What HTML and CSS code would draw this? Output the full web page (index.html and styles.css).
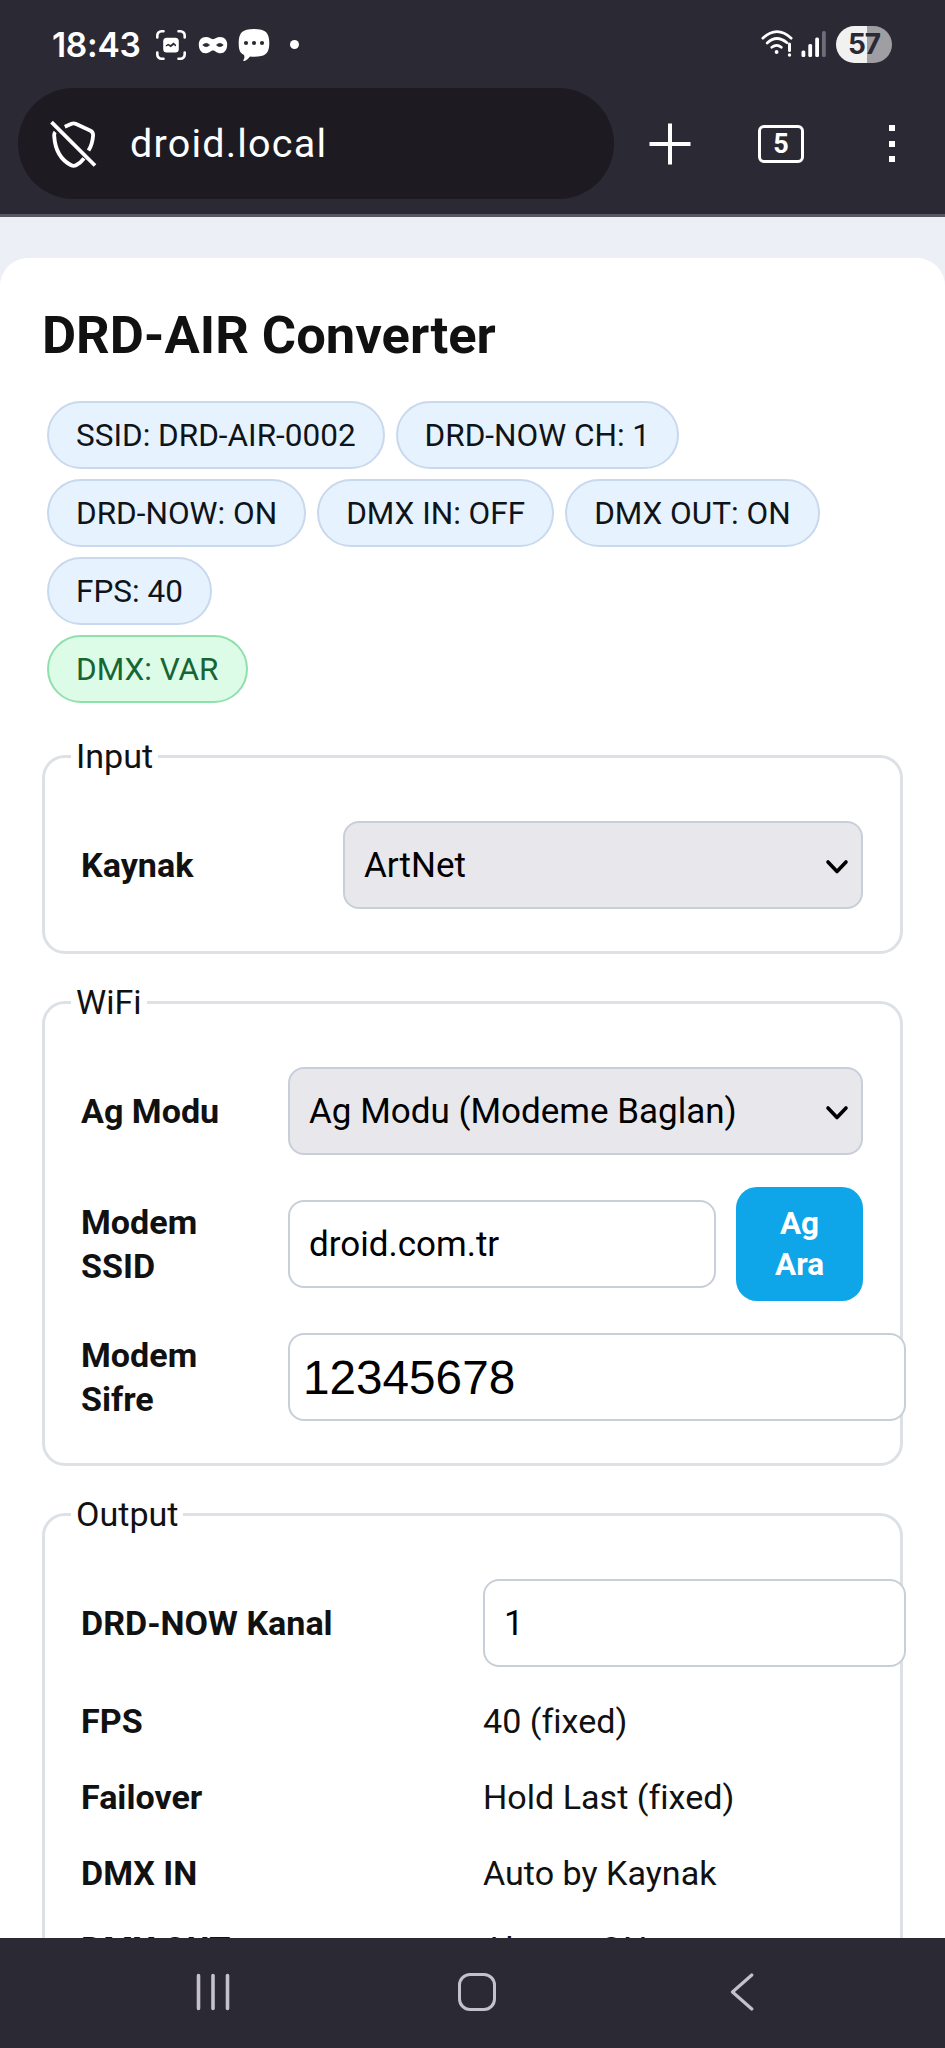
FILE: index.html
```html
<!DOCTYPE html>
<html lang="tr">
<head>
<meta charset="utf-8">
<title>DRD-AIR Converter</title>
<link rel="stylesheet" href="styles.css">
</head>
<body>
<header class="chrome">
  <div class="status">
    <span class="clock">18:43</span>
    <svg class="ic-capture" width="32" height="32" viewBox="0 0 32 32" fill="none" stroke="#fff" stroke-width="2.6" stroke-linecap="round">
      <path d="M2.3 8.5V6.5a4.2 4.2 0 0 1 4.2-4.2h2M23.500 2.300h2a4.200 4.200 0 0 1 4.200 4.200v2M29.700 23.500v2a4.200 4.200 0 0 1-4.200 4.200h-2M8.500 29.700h-2a4.200 4.200 0 0 1-4.200-4.200v-2"/>
      <rect x="8.200" y="8.800" width="15.600" height="14.800" rx="3.500" fill="#fff" stroke="none"/>
      <path d="M10.800 17.500v-1.200l2.400-1.600 2.300 1.300 3-2.600 2.500 2.400v1.700l-2.300-1.500-3 2.200-2.400-1.700z" fill="#2b2933" stroke="none"/>
    </svg>
    <svg class="ic-mask" width="30" height="20" viewBox="0 0 30 20">
      <path d="M8 1C3.500 1 .8 4 .8 8.500c0 5 2.500 8.800 6.700 8.800 3.800 0 5-2.800 7.500-2.800s3.700 2.800 7.500 2.800c4.200 0 6.700-3.800 6.700-8.800C29.200 4 26.500 1 22 1c-3.300 0-4.800 2.200-7 2.200S11.300 1 8 1z" fill="#fff"/>
      <path d="M4.800 9Q8.300 5.800 11.500 9 8.300 12.200 4.800 9zM25.200 9Q21.700 5.800 18.500 9 21.700 12.200 25.200 9z" fill="#2b2933" stroke="#2b2933" stroke-width=".8" stroke-linejoin="round"/>
    </svg>
    <svg class="ic-chat" width="32" height="34" viewBox="0 0 32 34">
      <path d="M16 1C4.500 1 .7 4.500.7 15c0 6.500 1 9.800 5.100 11.800 1 1.600.8 3.600-.4 5.300-.4.800.2 1.200 1.100.9 2.200-.8 3.800-2.400 5.500-4.500 1.300.2 2.600.2 4 .2C27.500 28.700 31.300 25.500 31.300 15S27.500 1 16 1z" fill="#fff"/>
      <g fill="#2b2933"><circle cx="8" cy="15" r="2.100"/><circle cx="16" cy="15" r="2.100"/><circle cx="24" cy="15" r="2.100"/></g>
    </svg>
    <span class="more"></span>
    <svg class="ic-wifi" width="32" height="28" viewBox="0 0 32 28" fill="none" stroke="#fff" stroke-width="2.700" stroke-linecap="round">
      <path d="M1.800 8.200Q16 -4.800 30.200 8.200M6.200 13Q15.500 4.200 26 12.700M10.800 17.300Q15.700 13.300 20.300 17.300"/>
      <circle cx="15.600" cy="22" r="1.900" fill="#fff" stroke="none"/>
      <path d="M28.500 14v6.500" stroke-width="3"/><circle cx="28.500" cy="25" r="1.700" fill="#fff" stroke="none"/>
    </svg>
    <svg class="ic-signal" width="26" height="28" viewBox="0 0 26 28" fill="#fff">
      <rect x=".5" y="20.500" width="3.800" height="6.500" rx="1.500"/><rect x="7.300" y="14" width="3.800" height="13" rx="1.500"/><rect x="14.200" y="7.500" width="3.800" height="19.500" rx="1.500"/><rect x="21" y="1" width="3.800" height="26" rx="1.500" fill="#6f6d77"/>
    </svg>
    <span class="battery">57</span>
  </div>
  <div class="toolbar">
    <div class="url">
      <svg width="48" height="48" viewBox="0 0 48 48" fill="none" stroke="#fff" stroke-width="3.800" stroke-linejoin="round">
        <path d="M1.500 2.200L45 45.500"/>
        <path d="M14.800 6.800l6.800-3q2-.9 4 0l14.500 6.600q3.200 1.500 3 5c-.4 6-1.800 10.800-4.600 15.200M5.200 12q-1.200 1.200-1 4c.9 14 6.800 24 17 29.300q2.400 1.200 4.800 0c3.200-1.700 5.800-4 8-7"/>
      </svg>
      <span>droid.local</span>
    </div>
    <svg class="ic-plus" width="42" height="42" viewBox="0 0 42 42" stroke="#fff" stroke-width="4"><path d="M21 .5v41M.5 21h41"/></svg>
    <span class="tabs">5</span>
    <span class="kebab"><i></i><i></i><i></i></span>
  </div>
</header>

<main class="page">
  <section class="card">
    <h1>DRD-AIR Converter</h1>
    <div class="pills">
      <div class="line"><span class="pill">SSID: DRD-AIR-0002</span><span class="pill">DRD-NOW CH: 1</span></div>
      <div class="line"><span class="pill">DRD-NOW: ON</span><span class="pill">DMX IN: OFF</span><span class="pill">DMX OUT: ON</span></div>
      <div class="line"><span class="pill">FPS: 40</span></div>
      <div class="line"><span class="pill ok">DMX: VAR</span></div>
    </div>

    <fieldset class="input-set">
      <legend>Input</legend>
      <div class="row">
        <label>Kaynak</label>
        <div class="pick">
          <select><option>ArtNet</option></select>
          <svg width="24" height="16" viewBox="0 0 24 16" fill="none" stroke="#000" stroke-width="3.600" stroke-linecap="round" stroke-linejoin="round"><path d="M3 3l9 9.500L21 3"/></svg>
        </div>
      </div>
    </fieldset>

    <fieldset class="wifi-set">
      <legend>WiFi</legend>
      <div class="row">
        <label>Ag Modu</label>
        <div class="pick">
          <select><option>Ag Modu (Modeme Baglan)</option></select>
          <svg width="24" height="16" viewBox="0 0 24 16" fill="none" stroke="#000" stroke-width="3.600" stroke-linecap="round" stroke-linejoin="round"><path d="M3 3l9 9.500L21 3"/></svg>
        </div>
      </div>
      <div class="row tall">
        <label>Modem<br>SSID</label>
        <div class="scan"><input type="text" value="droid.com.tr"><button>Ag<br>Ara</button></div>
      </div>
      <div class="row">
        <label>Modem<br>Sifre</label>
        <input class="wide secret" type="text" value="12345678">
      </div>
    </fieldset>

    <fieldset class="output-set">
      <legend>Output</legend>
      <div class="row first"><label>DRD-NOW Kanal</label><input class="wide" type="text" value="1"></div>
      <div class="row short"><label>FPS</label><span>40 (fixed)</span></div>
      <div class="row short"><label>Failover</label><span>Hold Last (fixed)</span></div>
      <div class="row short"><label>DMX IN</label><span>Auto by Kaynak</span></div>
      <div class="row short"><label>DMX OUT</label><span>Always ON</span></div>
    </fieldset>
  </section>
</main>

<nav class="navbar">
  <svg class="nav-recents" width="34" height="38" viewBox="0 0 34 38" stroke="#c5c1cc" stroke-width="3.600" stroke-linecap="round"><path d="M2.500 2.500v33M17 2.500v33M31.500 2.500v33"/></svg>
  <span class="nav-home"></span>
  <svg class="nav-back" width="24" height="38" viewBox="0 0 24 38" fill="none" stroke="#c5c1cc" stroke-width="3.200" stroke-linecap="round" stroke-linejoin="round"><path d="M21.800 2L2.500 19l19.300 17"/></svg>
</nav>
</body>
</html>
```
FILE: styles.css
```css
* { box-sizing: border-box; }
body {
  margin: 0;
  width: 945px;
  height: 2048px;
  overflow: hidden;
  display: flex;
  flex-direction: column;
  background: #edeff6;
  color: #111;
  font: 34.1px/44px Roboto, sans-serif;
}

/* Browser chrome */
.chrome {
  flex: none;
  height: 217px;
  background: #2b2933;
  border-bottom: 3px solid #58565e;
  color: #fff;
}
.status {
  height: 88px;
  padding-left: 52px;
  display: flex;
  align-items: center;
}
.status > * { flex: none; }
.clock { width: 103px; font: 600 33.500px/40px Inter, sans-serif; letter-spacing: -.3px; padding-top: 1px; }
.ic-capture { margin-top: 2px; }
.ic-mask { margin: 3px 0 0 11px; }
.ic-chat { margin: 2px 0 0 10px; }
.more { width: 9px; height: 9px; border-radius: 50%; background: #fff; margin: 1px 0 0 20px; }
.ic-wifi { margin-left: 462px; }
.ic-signal { margin: 0 0 0 8px; }
.battery {
  width: 56px;
  height: 37px;
  margin: 1px 0 0 9px;
  border-radius: 19px;
  background: linear-gradient(90deg, #f1f1f1 55%, #9f9ea3 55%);
  color: #2b2933;
  text-align: center;
  font: 700 28px/37px Inter, sans-serif;
  letter-spacing: -1px;
}
.toolbar { height: 111px; padding-left: 18px; display: flex; align-items: center; }
.url {
  width: 596px;
  height: 111px;
  border-radius: 56px;
  background: #1d1b21;
  display: flex;
  align-items: center;
  padding-left: 32px;
  gap: 32px;
  font-size: 39.500px;
  letter-spacing: 1.200px;
}
.ic-plus { margin-left: 35px; }
.tabs {
  width: 46px;
  height: 38px;
  margin: 1px 0 0 67px;
  border: 3px solid #fff;
  border-radius: 6px;
  text-align: center;
  font-size: 27px;
  line-height: 32px;
  font-weight: 700;
}
.kebab { margin-left: 85px; display: grid; gap: 9.500px; }
.kebab i { width: 6px; height: 6px; background: #fff; }

/* Page */
.page { flex: 1; min-height: 0; overflow: hidden; padding-top: 41px; }
.card { background: #fff; border-radius: 28px; padding: 46px 42px 60px; height: 1900px; }
h1 { margin: 0; font-size: 52.500px; line-height: 62px; font-weight: 700; }
.pills { padding: 35px 0 0 5px; display: grid; gap: 10px; }
.line { display: flex; gap: 11px; }
.pill {
  height: 68px;
  padding: 1px 27px 0;
  border: 2px solid #c9d9ed;
  border-radius: 34px;
  background: #e6f2fe;
  font-size: 31.500px;
  line-height: 64px;
  color: #0f1419;
}
.pill.ok { background: #dcfce7; border-color: #8fe0ac; color: #166534; }

fieldset {
  margin: 0;
  min-width: 0;
  border: 3px solid #dde1e5;
  border-radius: 23px;
  padding: 33px 37px 32px 36px;
}
legend { margin-left: -10px; padding: 0 5px; height: 44px; }
.input-set { margin-top: 31px; --label: 262px; }
.wifi-set { margin-top: 26px; --label: 207px; }
.output-set { margin-top: 26px; --label: 402px; height: 640px; }
.row {
  height: 108px;
  display: grid;
  grid-template-columns: var(--label) minmax(0, 1fr);
  align-items: center;
}
.row.tall { height: 158px; }
.row.short { height: 76px; }
.row.first { margin-bottom: 6px; }
label { font-weight: 700; }
input, select {
  width: 100%;
  height: 88px;
  margin: 0;
  border: 2px solid #c8cfd9;
  border-radius: 16px;
  padding: 0 19px;
  background: #fff;
  color: #000;
  font: 35px/44px Roboto, sans-serif;
}
select { appearance: none; background: #e8e7ec; padding-top: 2px; }
.pick { display: grid; grid-template-columns: 1fr 38px; align-items: center; }
.pick select { grid-area: 1 / 1 / 2 / 3; }
.pick svg { grid-area: 1 / 2; z-index: 1; margin-top: 3px; }
.wide { width: calc(100% + 43px); padding-top: 1px; }
.secret { font: 47.700px "Liberation Sans", Arial, sans-serif; padding: 0 13px; }
.scan { display: grid; grid-template-columns: 428px 127px; justify-content: space-between; align-items: center; }
button {
  height: 114px;
  border: 0;
  border-radius: 21px;
  padding: 0;
  background: #0fa5e9;
  color: #fff;
  font: 700 31.500px/41px Roboto, sans-serif;
}

/* System navigation */
.navbar { flex: none; height: 110px; background: #2b2933; display: flex; align-items: center; padding: 0 0 2px 196px; }
.nav-home { width: 38px; height: 38px; margin-left: 228px; border: 3px solid #c5c1cc; border-radius: 12px; }
.nav-back { margin-left: 234px; }
```
